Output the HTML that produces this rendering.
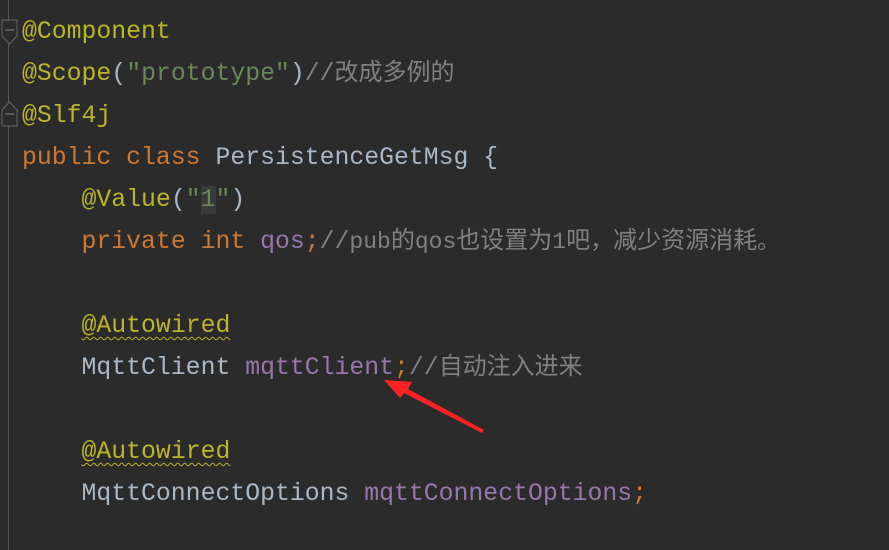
<!DOCTYPE html>
<html><head><meta charset="utf-8"><style>
body{margin:0;background:#2b2b2b;width:889px;height:550px;overflow:hidden;position:relative}
.g{position:absolute;left:8px;top:0;width:1px;height:550px;background:#555}
.l{position:absolute;left:22px;height:42px;line-height:42px;font-family:"Liberation Mono","Noto Sans CJK SC",monospace;font-size:24.8px;color:#a9b7c6;white-space:pre}
.a{color:#bbb529}.s{color:#6a8759}.k{color:#cc7832}.f{color:#9876aa}.c{color:#808080}
.w{text-decoration:underline wavy #bbb529;text-underline-offset:4px;text-decoration-thickness:1px}
.cj{font-size:24px}
.n{font-size:23px}
</style></head><body>
<div class="g"></div>
<svg style="position:absolute;left:0;top:0" width="22" height="130"><path d="M2 20 L17 20 L17 36 L9.5 44 L2 36 Z" fill="#2b2b2b" stroke="#666"/><line x1="5" y1="30" x2="14" y2="30" stroke="#888"/><path d="M2 126 L17 126 L17 110 L9.5 102 L2 110 Z" fill="#2b2b2b" stroke="#666"/><line x1="5" y1="114" x2="14" y2="114" stroke="#888"/></svg>
<div class="l" style="top:11px"><span class="a">@Component</span></div>
<div class="l" style="top:53px"><span class="a">@Scope</span>(<span class="s">"prototype"</span>)<span class="c">//<span class="cj">改成多例的</span></span></div>
<div class="l" style="top:95px"><span class="a">@Slf4j</span></div>
<div class="l" style="top:137px"><span class="k">public class </span>PersistenceGetMsg {</div>
<div class="l" style="top:179px">    <span class="a">@Value</span>(<span class="s">"<span style="background:#3a3a3a">1</span>"</span>)</div>
<div class="l" style="top:221px">    <span class="k">private int </span><span class="f">qos</span><span class="k">;</span><span class="c">//<span class="n">pub</span><span class="cj">的</span><span class="n">qos</span><span class="cj">也设置为</span><span class="n">1</span><span class="cj">吧</span><span class="n">，</span><span class="cj">减少资源消耗</span><span class="n">。</span></span></div>
<div class="l" style="top:305px">    <span class="a w">@Autowired</span></div>
<div class="l" style="top:347px">    MqttClient <span class="f">mqttClient</span><span class="k">;</span><span class="c">//<span class="cj">自动注入进来</span></span></div>
<div class="l" style="top:431px">    <span class="a w">@Autowired</span></div>
<div class="l" style="top:473px">    MqttConnectOptions <span class="f">mqttConnectOptions</span><span class="k">;</span></div>
<svg style="position:absolute;left:0;top:0" width="889" height="550"><path d="M484 430 L408 389 L412 382 L384 380 L400 398 L404 393 L482 433 Z" fill="#f22"/></svg>
</body></html>
